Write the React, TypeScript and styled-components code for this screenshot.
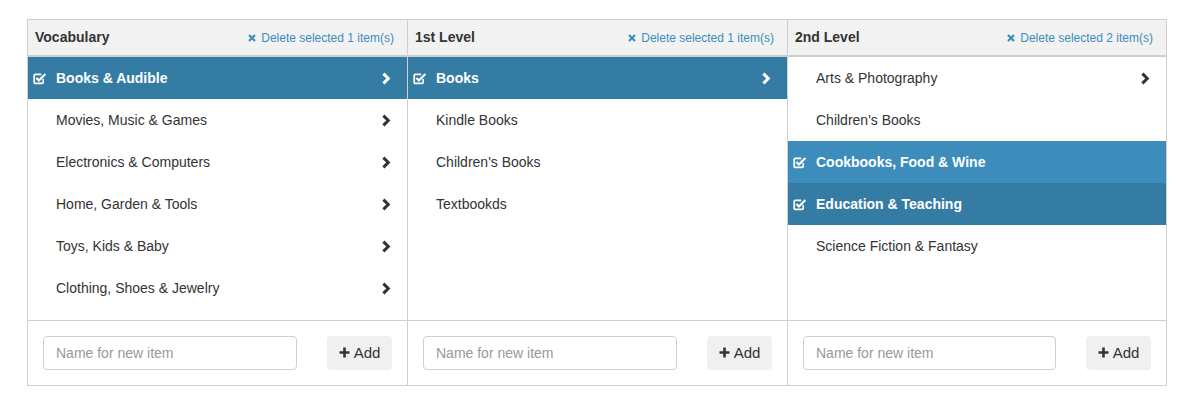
import React from "react";
import styled, { createGlobalStyle } from "styled-components";

const GlobalStyle = createGlobalStyle`
  html, body { margin: 0; padding: 0; background: #fff; }
  body {
    font-family: "Liberation Sans", Arial, Helvetica, sans-serif;
    color: #333;
    font-size: 14px;
  }
  * { box-sizing: border-box; }
`;

const Page = styled.div`
  padding-top: 19px;
`;

const Board = styled.div`
  width: 1140px;
  margin: 0 auto;
  border: 1px solid #cfcfcf;
  display: grid;
  grid-template-columns: 380px 380px 1fr;
`;

const Column = styled.section<{ $last?: boolean }>`
  display: flex;
  flex-direction: column;
  min-width: 0;
  border-right: ${(p) => (p.$last ? "none" : "1px solid #cfcfcf")};
`;

const Header = styled.header`
  height: 37px;
  background: #f2f2f2;
  border-bottom: 2px solid #cfcfcf;
  display: flex;
  align-items: center;
  justify-content: space-between;
  padding: 0 13px 1px 7px;
`;

const Title = styled.h3`
  margin: 0;
  font-size: 14px;
  font-weight: bold;
  color: #333;
`;

const DeleteLink = styled.a`
  display: flex;
  align-items: center;
  gap: 5px;
  font-size: 12px;
  color: #3c8dbc;
  text-decoration: none;
  cursor: pointer;
  padding-top: 2px;
`;

const List = styled.ul`
  list-style: none;
  margin: 0;
  padding: 0;
  height: 264px;
  border-bottom: 1px solid #cfcfcf;
`;

const Row = styled.li<{ $tone?: "dark" | "light" }>`
  height: 42px;
  display: flex;
  align-items: center;
  padding: 0 15px 0 5px;
  background: ${(p) =>
    p.$tone === "dark" ? "#357ca5" : p.$tone === "light" ? "#3c8dbc" : "#fff"};
  color: ${(p) => (p.$tone ? "#fff" : "#333")};
  font-weight: ${(p) => (p.$tone ? "bold" : "normal")};
  font-size: 14px;
`;

const IconSlot = styled.span`
  width: 23px;
  display: flex;
  align-items: center;
`;

const Label = styled.span`
  flex: 1;
`;

const Footer = styled.div`
  height: 64px;
  display: flex;
  align-items: center;
  gap: 30px;
  padding: 0 15px;
`;

const Input = styled.input`
  flex: 1;
  min-width: 0;
  height: 34px;
  border: 1px solid #cfcfcf;
  border-radius: 4px;
  padding: 0 12px;
  font-family: inherit;
  font-size: 14px;
  color: #333;
  &::placeholder { color: #999; }
`;

const AddButton = styled.button`
  width: 65px;
  height: 34px;
  border: none;
  border-radius: 4px;
  background: #f0f0f0;
  color: #333;
  font-family: inherit;
  font-size: 15px;
  display: flex;
  align-items: center;
  justify-content: center;
  gap: 4px;
  cursor: pointer;
  padding: 0 0 1px;
`;

const CheckIcon = () => (
  <svg width="14" height="13" viewBox="0 0 14 13">
    <path
      d="M10.2 7 V10.2 Q10.2 11.4 9 11.4 H2.4 Q1.2 11.4 1.2 10.2 V3.6 Q1.2 2.4 2.4 2.4 H8.2"
      fill="none"
      stroke="#fff"
      strokeWidth="1.7"
    />
    <path d="M3.4 6 L5.9 8.5 L12.4 2" fill="none" stroke="#fff" strokeWidth="2.2" />
  </svg>
);

const Chevron = ({ color }: { color: string }) => (
  <svg width="11" height="13" viewBox="0 0 11 13">
    <path d="M2.4 1.6 L7.3 6.5 L2.4 11.4" fill="none" stroke={color} strokeWidth="3" strokeLinejoin="miter" />
  </svg>
);

const TimesIcon = () => (
  <svg width="8" height="8" viewBox="0 0 8 8">
    <path d="M1 1 L7 7 M7 1 L1 7" stroke="#3c8dbc" strokeWidth="2.2" />
  </svg>
);

const PlusIcon = () => (
  <svg width="11" height="11" viewBox="0 0 11 11">
    <path d="M5.5 0.5 V10.5 M0.5 5.5 H10.5" stroke="#333" strokeWidth="2.6" />
  </svg>
);

type Item = { name: string; tone?: "dark" | "light"; children?: boolean };

type ColumnData = { title: string; count: number; items: Item[] };

const columns: ColumnData[] = [
  {
    title: "Vocabulary",
    count: 1,
    items: [
      { name: "Books & Audible", tone: "dark", children: true },
      { name: "Movies, Music & Games", children: true },
      { name: "Electronics & Computers", children: true },
      { name: "Home, Garden & Tools", children: true },
      { name: "Toys, Kids & Baby", children: true },
      { name: "Clothing, Shoes & Jewelry", children: true },
    ],
  },
  {
    title: "1st Level",
    count: 1,
    items: [
      { name: "Books", tone: "dark", children: true },
      { name: "Kindle Books" },
      { name: "Children's Books" },
      { name: "Textbookds" },
    ],
  },
  {
    title: "2nd Level",
    count: 2,
    items: [
      { name: "Arts & Photography", children: true },
      { name: "Children's Books" },
      { name: "Cookbooks, Food & Wine", tone: "light" },
      { name: "Education & Teaching", tone: "dark" },
      { name: "Science Fiction & Fantasy" },
    ],
  },
];

export default function App() {
  return (
    <>
      <GlobalStyle />
      <Page>
        <Board>
          {columns.map((col, ci) => (
            <Column key={col.title} $last={ci === columns.length - 1}>
              <Header>
                <Title>{col.title}</Title>
                <DeleteLink>
                  <TimesIcon />
                  Delete selected {col.count} item(s)
                </DeleteLink>
              </Header>
              <List>
                {col.items.map((it) => (
                  <Row key={it.name} $tone={it.tone}>
                    <IconSlot>{it.tone && <CheckIcon />}</IconSlot>
                    <Label>{it.name}</Label>
                    {it.children && <Chevron color={it.tone ? "#fff" : "#333"} />}
                  </Row>
                ))}
              </List>
              <Footer>
                <Input placeholder="Name for new item" />
                <AddButton>
                  <PlusIcon />
                  Add
                </AddButton>
              </Footer>
            </Column>
          ))}
        </Board>
      </Page>
    </>
  );
}
